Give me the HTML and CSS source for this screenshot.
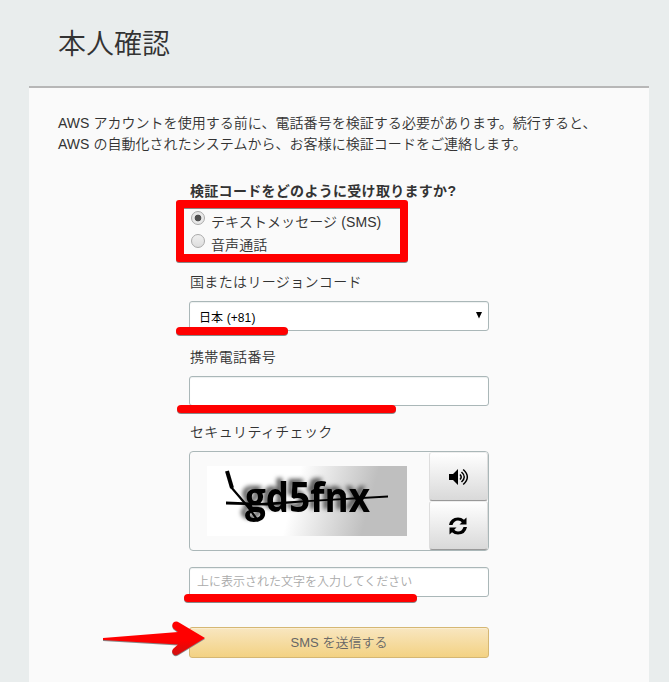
FILE: index.html
```html
<!DOCTYPE html>
<html lang="ja">
<head>
<meta charset="utf-8">
<title>本人確認</title>
<link rel="stylesheet" href="styles.css">
</head>
<body>
<main class="page">
  <h1 class="title">本人確認</h1>
  <section class="card">
    <p class="intro">AWS アカウントを使用する前に、電話番号を検証する必要があります。続行すると、<br>AWS の自動化されたシステムから、お客様に検証コードをご連絡します。</p>
    <form class="form">
      <div class="question">検証コードをどのように受け取りますか?</div>
      <div class="options">
        <label class="option"><span class="radio checked"></span><span>テキストメッセージ (SMS)</span></label>
        <label class="option"><span class="radio"></span><span>音声通話</span></label>
      </div>
      <div class="label">国またはリージョンコード</div>
      <div class="field select"><span>日本 (+81)</span><svg class="caret" width="6" height="7" viewBox="0 0 6 7"><path d="M0 0h6L3 6.500z"/></svg></div>
      <div class="label">携帯電話番号</div>
      <div class="field"></div>
      <div class="label">セキュリティチェック</div>
      <div class="captcha">
        <div class="picture">
          <svg width="200" height="70" viewBox="0 0 200 70">
            <text class="code" x="38" y="46" textLength="125" lengthAdjust="spacingAndGlyphs">gd5fnx</text>
            <path d="M20 5l5 17" class="stroke thick"/>
            <path d="M24 21l18 21 9 13" class="stroke"/>
            <path d="M19 35.500l34 1.500 128-7.500v2L100 36 60 39.500l-41-1z"/>
          </svg>
        </div>
        <div class="tools">
          <button type="button" class="tool" aria-label="音声"><svg width="21" height="18" viewBox="0 0 21 18"><path d="M1 6h4l5-5v16l-5-5H1z"/><g fill="none" stroke="#000" stroke-width="1.5"><path d="M12 6.5q2.4 2.5 0 5M13.5 4q5.5 5 0 10M15.2 1.5q8.3 7.5 0 15"/></g></svg></button>
          <button type="button" class="tool" aria-label="更新"><svg width="20" height="20" viewBox="0 0 20 20"><path d="M1 9Q2.500 1.500 10 1.500q3.500 0 6 2.200L18.500 1.500v7h-7l2.300-2.300Q12.500 4.500 10 4.500 6 4.500 4.500 9zM19 11q-1.500 7.500-9 7.500-3.500 0-6-2.200L1.500 18.500v-7h7l-2.300 2.300q1.300 1.700 3.800 1.700 4 0 5.500-4.500z"/></svg></button>
        </div>
      </div>
      <div class="field hint"><span>上に表示された文字を入力してください</span></div>
      <button type="button" class="submit"><span>SMS を送信する</span></button>
    </form>
  </section>
</main>
<svg class="marks" width="669" height="682" viewBox="0 0 669 682">
  <defs><linearGradient id="arrow" x1="0" y1="0" x2="0" y2="1"><stop offset="0" stop-color="#f00"/><stop offset=".55" stop-color="#f00"/><stop offset="1" stop-color="#d01010"/></linearGradient></defs>
  <g class="mark">
    <path fill-rule="evenodd" d="M179 200H405q3 0 3 3v56q0 3-3 3H179q-3 0-3-3v-56q0-3 3-3zM184 208v46H400v-46z"/>
    <rect x="176" y="327" width="112" height="8" rx="4"/>
    <rect x="177" y="405" width="219" height="8" rx="4"/>
    <rect x="184" y="594" width="233" height="8" rx="4"/>
    <path fill="url(#arrow)" d="M103 638L178 632 173.500 628.500C170 624 175 619.500 179 622.500L205 638 178 654.500C174 657 170 652 173.500 648.500L178 644.500 103 640z"/>
  </g>
</svg>
</body>
</html>
```

FILE: styles.css
```css
* { box-sizing: border-box; }
body {
  margin: 0;
  height: 682px;
  overflow: hidden;
  background: #e9eded;
  color: #333;
  font: 14px/21px "Liberation Sans", "Noto Sans CJK JP", sans-serif;
}
.page { width: 620px; margin-left: 29px; }
.title {
  margin: 0;
  height: 86px;
  padding: 24px 29px 0;
  font-size: 28px;
  line-height: 42px;
  font-weight: 350;
}
.card {
  height: 596px;
  border-top: 2px solid #b7b7b7;
  background: #fafafa;
  padding: 25px 29px 0;
}
.intro { margin: 0; white-space: nowrap; font-weight: 350; letter-spacing: .04px; }
.form { width: 300px; margin: 26px 0 0 131px; }
.question { height: 22px; padding-left: 1px; font-weight: 700; white-space: nowrap; letter-spacing: .3px; }
.options { height: 68px; padding-top: 9px; }
.option { display: flex; align-items: flex-start; gap: 6px; height: 23px; line-height: 21px; padding-left: 2px; font-weight: 350; }
.option span:last-child { letter-spacing: .1px; }
.radio {
  width: 14px;
  height: 14px;
  margin-top: -1px;
  border: 1px solid #aaa;
  border-radius: 50%;
  background: linear-gradient(#f0f0f0, #ddd);
}
.radio.checked { background: radial-gradient(circle, #505050 0 3px, #e8e8e8 3.7px); }
.label { height: 30px; padding-left: 1px; line-height: 22px; font-weight: 350; letter-spacing: .35px; }
.field {
  height: 30px;
  margin-bottom: 15px;
  border: 1px solid #aab7b8;
  border-radius: 3px;
  background: #fff;
  box-shadow: inset 0 1px 1px #edf0f0;
}
.select {
  display: flex;
  justify-content: space-between;
  align-items: center;
  padding: 4px 6px 0 9px;
  color: #000;
  font-size: 12px;
  letter-spacing: .1px;
}
.caret { margin-top: -6px; }
.captcha {
  display: flex;
  height: 100px;
  border: 1px solid #aab7b8;
  border-radius: 4px;
  margin-bottom: 16px;
}
.picture {
  width: 200px;
  height: 70px;
  margin: 14px 22px 0 17px;
  background: linear-gradient(105deg, #fff 43%, #bfbfbf 79%);
}
.picture svg { display: block; }
.code { font: 700 42px "Open Sans", sans-serif; fill: #000; filter: drop-shadow(-4px -3px 2px #555); }
.stroke { fill: none; stroke: #000; stroke-width: 2.2; }
.thick { stroke-width: 4; }
.tools { width: 59px; flex: none; }
.tool {
  display: flex;
  align-items: center;
  justify-content: center;
  width: 59px;
  height: 49px;
  padding: 0 1px 0 0;
  border: 1px solid #ddd;
  border-top-color: #eee;
  border-bottom: 1px solid #999;
  border-radius: 3px;
  background: linear-gradient(#fff, #d9d9d9);
}
.hint { padding: 4px 7px; color: #aaa; font-size: 12px; font-weight: 350; line-height: 21px; }
.submit {
  display: block;
  width: 300px;
  height: 31px;
  margin-top: 30px;
  padding: 0;
  border: 1px solid #d5b773;
  border-radius: 3px;
  background: linear-gradient(#f8e6c0, #f3d283);
  box-shadow: inset 0 1px #faedd1;
  color: #666;
  font: 350 13px/20px "Liberation Sans", "Noto Sans CJK JP", sans-serif;
}
.marks { position: absolute; left: 0; top: 0; pointer-events: none; }
.mark { fill: #f00; filter: drop-shadow(0 1px .5px #888); }
```
